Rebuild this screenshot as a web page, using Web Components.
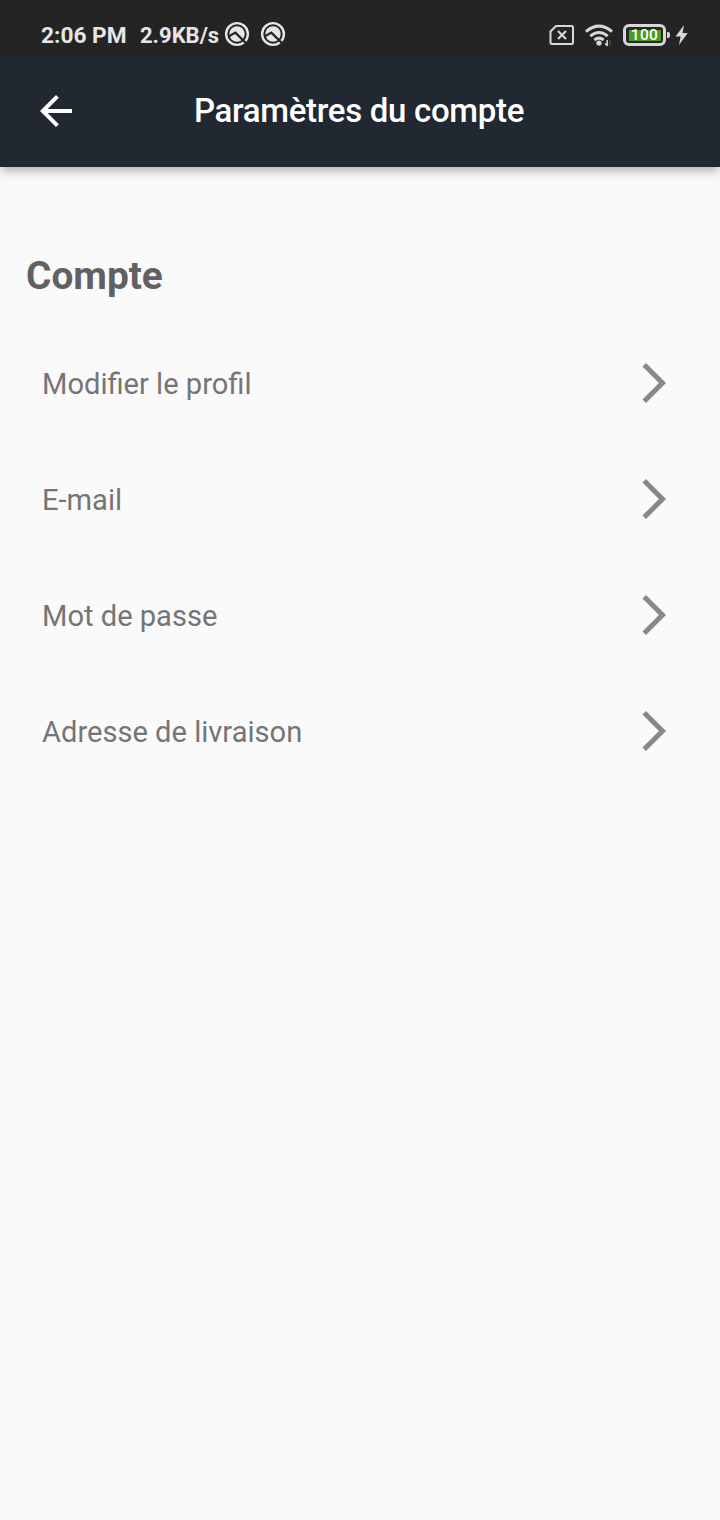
<!DOCTYPE html>
<html lang="fr">
<head>
<meta charset="utf-8">
<title>Paramètres du compte</title>
<style>
  body {
    margin: 0;
    background: #fafafa;
    font-family: Roboto, sans-serif;
  }
</style>
</head>
<body>
<settings-page>
  <status-bar slot="status" time="2:06 PM" speed="2.9KB/s" battery="100"></status-bar>
  <app-bar slot="bar">Paramètres du compte</app-bar>
  <settings-section>
    <span slot="title">Compte</span>
    <settings-row>Modifier le profil</settings-row>
    <settings-row>E-mail</settings-row>
    <settings-row>Mot de passe</settings-row>
    <settings-row>Adresse de livraison</settings-row>
  </settings-section>
</settings-page>

<script>
class SettingsPage extends HTMLElement {
  constructor() {
    super();
    const shadow = this.attachShadow({ mode: 'open' });
    shadow.innerHTML = `
      <style>
        :host {
          display: flex;
          flex-direction: column;
          min-height: 1520px;
          background: #fafafa;
        }
      </style>
      <slot name="status"></slot>
      <slot name="bar"></slot>
      <slot></slot>
    `;
  }
}

class NotificationIcon extends HTMLElement {
  constructor() {
    super();
    const shadow = this.attachShadow({ mode: 'open' });
    shadow.innerHTML = `
      <style>
        :host { display: block; width: 26px; height: 26px; }
        svg { display: block; }
      </style>
      <svg width="26" height="26" viewBox="0 0 26 26">
        <circle cx="13" cy="13" r="10.9" fill="none" stroke="#e6e6e6" stroke-width="2.4"/>
        <circle cx="13" cy="13" r="7.7" fill="#e6e6e6"/>
        <path d="M4.5 15.6L11.4 11.6L22.6 22.8" fill="none" stroke="#242424" stroke-width="2.3"/>
      </svg>
    `;
  }
}

class StatusBar extends HTMLElement {
  constructor() {
    super();
    const shadow = this.attachShadow({ mode: 'open' });
    shadow.innerHTML = `
      <style>
        :host {
          display: flex;
          align-items: center;
          box-sizing: border-box;
          height: 55px;
          padding: 15px 32px 0 41px;
          background: #242424;
          color: #e6e6e6;
          font-size: 22.7px;
          font-weight: 700;
          line-height: 40px;
          white-space: nowrap;
        }
        svg { display: block; }
        .time { width: 99px; padding-top: 1px; }
        .speed { width: 84px; padding-top: 1px; font-size: 22px; }
        .notifications { display: flex; gap: 10px; margin-top: -2px; }
        .system { display: flex; align-items: center; margin-left: auto; }
        .wifi { margin-left: 10px; }
        .battery {
          display: grid;
          place-items: center;
          box-sizing: border-box;
          width: 43px;
          height: 22px;
          margin-left: 10px;
          border: 3px solid #d9d5da;
          border-radius: 6px;
          background: linear-gradient(#4b9b20, #4b9b20) center / 32px 11px no-repeat #242b20;
          color: #fff;
          font-size: 15.5px;
          font-weight: 500;
          line-height: 16px;
          letter-spacing: .4px;
        }
        .tip { width: 3px; height: 6px; margin-left: 1px; background: #d9d5da; border-radius: 0 2px 2px 0; }
        .bolt { margin-left: 5px; }
      </style>
      <span class="time"></span>
      <span class="speed"></span>
      <div class="notifications">
        <notification-icon></notification-icon>
        <notification-icon></notification-icon>
      </div>
      <div class="system">
        <svg width="26" height="22" viewBox="0 0 26 22" fill="none" stroke="#d9d5da">
          <path d="M7 2H22.5Q24 2 24 3.5V18.5Q24 20 22.5 20H3Q1.5 20 1.5 18.5V7.5Z" stroke-width="2"/>
          <path d="M9 7L17 15M17 7L9 15" stroke-width="2.2"/>
        </svg>
        <svg class="wifi" width="28" height="22" viewBox="0 0 28 22" fill="none" stroke="#d9d5da" stroke-width="3.1">
          <path d="M1 7.6Q14 -3.4 27 7.6"/>
          <path d="M5.3 12.1Q14 4.9 22.7 12.1"/>
          <path d="M9.4 16Q14 12.2 18.6 16"/>
          <circle cx="14" cy="19" r="2.6" fill="#d9d5da" stroke="none"/>
          <path d="M22.2 16V22L20.2 19.2" stroke-width="1.5"/>
          <path d="M25 22V16" stroke="#555" stroke-width="1.2"/>
        </svg>
        <div class="battery"></div>
        <span class="tip"></span>
        <svg class="bolt" width="13" height="20" viewBox="0 0 13 20">
          <path d="M9 0L.5 11.6H5.6L4 20L12.7 8H7.6Z" fill="#d9d5da"/>
        </svg>
      </div>
    `;
    shadow.querySelector('.time').textContent = this.getAttribute('time');
    shadow.querySelector('.speed').textContent = this.getAttribute('speed');
    shadow.querySelector('.battery').textContent = this.getAttribute('battery');
  }
}

class AppBar extends HTMLElement {
  constructor() {
    super();
    const shadow = this.attachShadow({ mode: 'open' });
    shadow.innerHTML = `
      <style>
        :host {
          display: grid;
          grid-template-columns: 48px 1fr 48px;
          align-items: center;
          box-sizing: border-box;
          height: 112px;
          padding: 0 32px;
          background: #222831;
          box-shadow: 0 4px 8px -2px rgba(0, 0, 0, .2), 0 8px 10px rgba(0, 0, 0, .08), 0 2px 12px rgba(0, 0, 0, .08);
          color: #fff;
          font-size: 33px;
          font-weight: 500;
          letter-spacing: -.3px;
          text-align: center;
        }
        svg { display: block; }
        span { padding: 0 2px 2px 0; }
      </style>
      <svg width="48" height="48" viewBox="0 0 24 24" fill="#fff">
        <path d="M20 11H7.83l5.59-5.59L12 4l-8 8 8 8 1.41-1.41L7.83 13H20v-2z"/>
      </svg>
      <span><slot></slot></span>
    `;
  }
}

class SettingsSection extends HTMLElement {
  constructor() {
    super();
    const shadow = this.attachShadow({ mode: 'open' });
    shadow.innerHTML = `
      <style>
        :host { display: block; padding: 85px 26px 0; }
        h2 {
          margin: 0 0 26px;
          color: #616161;
          font-size: 38.8px;
          font-weight: 700;
          line-height: 47px;
        }
      </style>
      <h2><slot name="title"></slot></h2>
      <slot></slot>
    `;
  }
}

class SettingsRow extends HTMLElement {
  constructor() {
    super();
    const shadow = this.attachShadow({ mode: 'open' });
    shadow.innerHTML = `
      <style>
        :host {
          display: flex;
          align-items: center;
          justify-content: space-between;
          height: 116px;
          padding: 0 16px;
          color: #757575;
          font-size: 29.1px;
        }
        span { padding-top: 2px; }
      </style>
      <span><slot></slot></span>
      <svg width="48" height="48" viewBox="0 0 24 24" fill="#888">
        <path d="M6.23 20.23L8 22l10-10L8 2 6.23 3.77 14.46 12z"/>
      </svg>
    `;
  }
}

customElements.define('notification-icon', NotificationIcon);
customElements.define('status-bar', StatusBar);
customElements.define('app-bar', AppBar);
customElements.define('settings-section', SettingsSection);
customElements.define('settings-row', SettingsRow);
customElements.define('settings-page', SettingsPage);
</script>
</body>
</html>
